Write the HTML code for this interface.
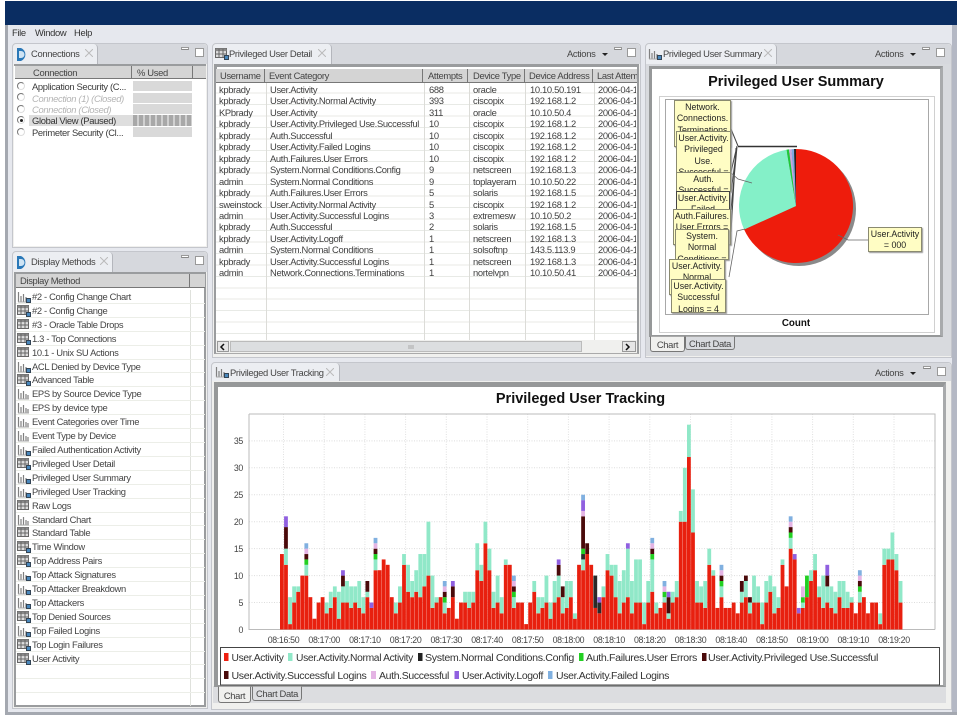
<!DOCTYPE html>
<html>
<head>
<meta charset="utf-8">
<style>
html,body{margin:0;padding:0;background:#fff}
#root{position:relative;width:960px;height:716px;overflow:hidden;background:#fff;font-family:"Liberation Sans",sans-serif;font-size:9.4px;letter-spacing:-.33px;color:#3c3c3c;filter:blur(.35px)}
.a{position:absolute}
.panel{position:absolute;background:#f0f0ee;border:1px solid #c4c6cc;border-radius:4px 4px 0 0;box-sizing:border-box}
.tabbar{position:absolute;left:0;right:0;top:0;height:20px;background:#d6d8dd;border-radius:4px 4px 0 0}
.tab{position:absolute;top:0;height:20px;background:#eceef2;border-radius:4px 4px 0 0;border-right:1px solid #b4b6bc;box-sizing:border-box;line-height:20px;white-space:nowrap;color:#444}
.x{position:absolute;top:5px;width:8px;height:8px}
.frame{position:absolute;background:#fff;border:3px solid #969899;border-bottom-width:2px;border-right-color:#a8aaac;box-sizing:border-box}
.mm{position:absolute;width:8px;height:3px;background:#fff;border:1px solid #999;border-bottom:1px solid #888;box-sizing:border-box}
.mx{position:absolute;width:9px;height:9px;background:#fff;border:1px solid #999;box-sizing:border-box}
.hd{position:absolute;background:#d4d4d4;border-bottom:1px solid #777;box-sizing:border-box;line-height:13px;color:#444;white-space:nowrap}
.col{position:absolute;white-space:pre;line-height:11.46px;color:#404040}
.rad{position:absolute;left:17px;width:8px;height:8px;border-radius:50%;border:1px solid #777;border-right-color:#ddd;border-bottom-color:#ddd;box-sizing:border-box;background:#fff}
.cr{position:absolute;left:32px;white-space:nowrap;line-height:11px}
.bar{position:absolute;left:133px;width:59px;height:10px;background:#d9d9d9}
.dm{position:relative;height:13.92px;line-height:13.92px;white-space:nowrap;color:#444;padding-left:16px;box-sizing:border-box;border-bottom:1px solid #eceee8}
.dm svg{position:absolute;left:1px;top:1px}
.yl{position:absolute;background:#fffdc4;border:1px solid #8a8a70;box-sizing:border-box;overflow:hidden;text-align:center;font-size:8.8px;letter-spacing:0;line-height:11.4px;color:#222;box-shadow:1px 1px 1px #999;padding-top:1px}
.bt{position:absolute;border:1px solid #777;border-top:1px solid #aaa;box-sizing:border-box;text-align:center;color:#444;border-radius:0 0 3px 3px;font-size:9.4px}
.ttl{letter-spacing:0}
</style>
</head>
<body>
<div id="root">
<svg width="0" height="0" style="position:absolute">
<defs>
<g id="tb"><rect x=".5" y=".5" width="11" height="9" fill="#ddd" stroke="#666"/><rect x=".5" y=".5" width="11" height="2.6" fill="#888"/><path d="M4 1v8M8 1v8M1 6h10" stroke="#666" fill="none"/></g>
<g id="cb"><path d="M1.5 1v10M4 5v6M6.500 3v8M9 6v5M11 7v4" stroke="#808080" stroke-width="1.200" fill="none"/><path d="M1 11h11" stroke="#aaa"/></g>
<g id="bd"><rect x="9.500" y="7.500" width="4" height="4" fill="#4a88bc" stroke="#345"/></g>
</defs>
</svg>

<!-- window chrome -->
<div class="a" style="left:5px;top:1px;width:952px;height:712px;background:#e6e8ee"></div>
<div class="a" style="left:5px;top:1px;width:952px;height:24px;background:#0a2d62"></div>
<div class="a" style="left:5px;top:25px;width:3px;height:690px;background:#a4a8b0"></div>
<div class="a" style="left:952px;top:25px;width:5px;height:690px;background:#b4b8c4"></div>
<div class="a" style="left:5px;top:712px;width:952px;height:3px;background:#a4a8b0"></div>
<div class="a" style="left:12px;top:27px;white-space:nowrap;line-height:12px;color:#333">File</div>
<div class="a" style="left:35px;top:27px;white-space:nowrap;line-height:12px;color:#333">Window</div>
<div class="a" style="left:74px;top:27px;white-space:nowrap;line-height:12px;color:#333">Help</div>

<!-- Connections -->
<div class="panel" style="left:12px;top:43px;width:196px;height:205px">
  <div class="tabbar"></div>
  <div class="tab" style="left:0;width:85px;padding-left:18px">Connections</div>
  <svg class="a" style="left:3px;top:4px" width="13" height="13"><path d="M1 0h4a7 7 0 0 1 0 13H1z" fill="#2a78b8"/><path d="M3 3h2a3.500 3.500 0 0 1 0 7H3z" fill="#cfe4f4"/></svg>
  <svg class="x" style="left:72px"><path d="M0 0l8 8M8 0l-8 8" stroke="#bbb" stroke-width="1"/></svg>
  <div class="mm" style="left:168px;top:3px"></div><div class="mx" style="left:182px;top:4px"></div>
  <div class="a" style="left:1px;right:1px;top:20px;bottom:1px;background:#fff;border-top:2px solid #9a9c9e"></div>
</div>
<div class="hd" style="left:15px;top:66px;width:16px;height:13px"></div>
<div class="hd" style="left:31px;top:66px;width:101px;height:13px;padding-left:2px;border-right:1px solid #777">Connection</div>
<div class="hd" style="left:132px;top:66px;width:61px;height:13px;padding-left:5px;border-right:1px solid #777">% Used</div>
<div class="hd" style="left:193px;top:66px;width:13px;height:13px"></div>
<div class="rad" style="top:82px"></div><div class="cr" style="top:81px">Application Security (C...</div><div class="bar" style="top:81px"></div>
<div class="rad" style="top:93px"></div><div class="cr" style="top:92.500px;color:#b4b4b4;font-style:italic">Connection (1) (Closed)</div><div class="bar" style="top:92.500px"></div>
<div class="rad" style="top:105px"></div><div class="cr" style="top:104px;color:#b4b4b4;font-style:italic">Connection (Closed)</div><div class="bar" style="top:104px"></div>
<div class="a" style="left:29px;top:115px;width:104px;height:11px;background:#dedede"></div>
<div class="rad" style="top:116px"></div><div class="a" style="left:19.500px;top:118.500px;width:3px;height:3px;border-radius:50%;background:#222"></div><div class="cr" style="top:115px;color:#333">Global View (Paused)</div>
<div class="a" style="left:133px;top:115px;width:59px;height:11px;background:repeating-linear-gradient(90deg,#a8a8a8 0 4px,#d0d0d0 4px 6px)"></div>
<div class="rad" style="top:128px"></div><div class="cr" style="top:127px">Perimeter Security (Cl...</div><div class="bar" style="top:127px"></div>

<!-- Display Methods -->
<div class="panel" style="left:12px;top:251px;width:196px;height:458px">
  <div class="tabbar"></div>
  <div class="tab" style="left:0;width:100px;padding-left:18px">Display Methods</div>
  <svg class="a" style="left:3px;top:4px" width="13" height="13"><path d="M1 0h4a7 7 0 0 1 0 13H1z" fill="#2a78b8"/><path d="M3 3h2a3.500 3.500 0 0 1 0 7H3z" fill="#cfe4f4"/></svg>
  <svg class="x" style="left:87px"><path d="M0 0l8 8M8 0l-8 8" stroke="#bbb" stroke-width="1"/></svg>
  <div class="mm" style="left:168px;top:3px"></div><div class="mx" style="left:182px;top:4px"></div>
  <div class="a" style="left:1px;right:1px;top:20px;bottom:1px;background:#fff;border:2px solid #9a9c9e;border-bottom-width:2px"></div>
</div>
<div class="hd" style="left:16px;top:274px;width:174px;height:14px;padding-left:4px;border-right:1px solid #777;line-height:14px">Display Method</div>
<div class="hd" style="left:190px;top:274px;width:15px;height:14px"></div>
<div class="a" style="left:16px;top:290px;width:189px;height:416px;overflow:hidden;background:linear-gradient(90deg,transparent 174px,#dfe1dc 174px,#dfe1dc 175px,transparent 175px)">
<div class="dm"><svg width="16" height="13"><use href="#cb"/><use href="#bd"/></svg>#2 - Config Change Chart</div>
<div class="dm"><svg width="16" height="13"><use href="#tb"/><use href="#bd"/></svg>#2 - Config Change</div>
<div class="dm"><svg width="16" height="13"><use href="#tb"/></svg>#3 - Oracle Table Drops</div>
<div class="dm"><svg width="16" height="13"><use href="#tb"/><use href="#bd"/></svg>1.3 - Top Connections</div>
<div class="dm"><svg width="16" height="13"><use href="#tb"/></svg>10.1 - Unix SU Actions</div>
<div class="dm"><svg width="16" height="13"><use href="#cb"/><use href="#bd"/></svg>ACL Denied by Device Type</div>
<div class="dm"><svg width="16" height="13"><use href="#tb"/><use href="#bd"/></svg>Advanced Table</div>
<div class="dm"><svg width="16" height="13"><use href="#cb"/></svg>EPS by Source Device Type</div>
<div class="dm"><svg width="16" height="13"><use href="#cb"/></svg>EPS by device type</div>
<div class="dm"><svg width="16" height="13"><use href="#cb"/></svg>Event Categories over Time</div>
<div class="dm"><svg width="16" height="13"><use href="#cb"/></svg>Event Type by Device</div>
<div class="dm"><svg width="16" height="13"><use href="#cb"/><use href="#bd"/></svg>Failed Authentication Activity</div>
<div class="dm"><svg width="16" height="13"><use href="#tb"/><use href="#bd"/></svg>Privileged User Detail</div>
<div class="dm"><svg width="16" height="13"><use href="#cb"/><use href="#bd"/></svg>Privileged User Summary</div>
<div class="dm"><svg width="16" height="13"><use href="#cb"/><use href="#bd"/></svg>Privileged User Tracking</div>
<div class="dm"><svg width="16" height="13"><use href="#tb"/></svg>Raw Logs</div>
<div class="dm"><svg width="16" height="13"><use href="#cb"/></svg>Standard Chart</div>
<div class="dm"><svg width="16" height="13"><use href="#tb"/></svg>Standard Table</div>
<div class="dm"><svg width="16" height="13"><use href="#tb"/><use href="#bd"/></svg>Time Window</div>
<div class="dm"><svg width="16" height="13"><use href="#tb"/><use href="#bd"/></svg>Top Address Pairs</div>
<div class="dm"><svg width="16" height="13"><use href="#cb"/><use href="#bd"/></svg>Top Attack Signatures</div>
<div class="dm"><svg width="16" height="13"><use href="#cb"/><use href="#bd"/></svg>Top Attacker Breakdown</div>
<div class="dm"><svg width="16" height="13"><use href="#cb"/><use href="#bd"/></svg>Top Attackers</div>
<div class="dm"><svg width="16" height="13"><use href="#tb"/><use href="#bd"/></svg>Top Denied Sources</div>
<div class="dm"><svg width="16" height="13"><use href="#cb"/><use href="#bd"/></svg>Top Failed Logins</div>
<div class="dm"><svg width="16" height="13"><use href="#tb"/><use href="#bd"/></svg>Top Login Failures</div>
<div class="dm"><svg width="16" height="13"><use href="#tb"/><use href="#bd"/></svg>User Activity</div>
<div class="dm"></div><div class="dm"></div><div class="dm"></div>
</div>

<!-- Detail -->
<div class="panel" style="left:212px;top:43px;width:429px;height:315px">
  <div class="tabbar"></div>
  <div class="tab" style="left:0;width:119px;padding-left:16px">Privileged User Detail</div>
  <svg class="a" style="left:2px;top:4px" width="16" height="13"><use href="#tb"/><use href="#bd"/></svg>
  <svg class="x" style="left:105px"><path d="M0 0l8 8M8 0l-8 8" stroke="#bbb" stroke-width="1"/></svg>
  <div class="a" style="left:354px;top:4px;line-height:12px;color:#444">Actions</div>
  <div class="a" style="left:389px;top:9px;border:3px solid transparent;border-top:3px solid #222"></div>
  <div class="mm" style="left:401px;top:3px"></div><div class="mx" style="left:414px;top:4px"></div>
  <div class="a" style="left:1px;right:1px;top:20px;bottom:3px;background:#fff;border:3px solid #9a9c9e;border-bottom:1px solid #aaa;border-right-width:2px;box-sizing:border-box"></div>
</div>
<div class="a" style="left:216px;top:82px;width:421px;height:258px;background:repeating-linear-gradient(180deg,#fff 0 10.46px,#e8eae6 10.46px 11.46px)"></div>
<div class="a" style="left:265.500px;top:82px;width:1px;height:258px;background:#dcdcd8"></div>
<div class="a" style="left:424px;top:82px;width:1px;height:258px;background:#dcdcd8"></div>
<div class="a" style="left:469px;top:82px;width:1px;height:258px;background:#dcdcd8"></div>
<div class="a" style="left:525px;top:82px;width:1px;height:258px;background:#dcdcd8"></div>
<div class="a" style="left:593.500px;top:82px;width:1px;height:258px;background:#dcdcd8"></div>
<div class="hd" style="left:216px;top:69px;width:49px;height:14px;padding-left:4px;border-right:1px solid #777;line-height:14px">Username</div>
<div class="hd" style="left:265px;top:69px;width:158px;height:14px;padding-left:4px;border-right:1px solid #777;line-height:14px">Event Category</div>
<div class="hd" style="left:423px;top:69px;width:45px;height:14px;padding-left:5px;border-right:1px solid #777;line-height:14px">Attempts</div>
<div class="hd" style="left:468px;top:69px;width:57px;height:14px;padding-left:5px;border-right:1px solid #777;line-height:14px">Device Type</div>
<div class="hd" style="left:525px;top:69px;width:68px;height:14px;padding-left:4px;border-right:1px solid #777;line-height:14px">Device Address</div>
<div class="hd" style="left:593px;top:69px;width:44px;height:14px;padding-left:4px;line-height:14px;overflow:hidden">Last Attempt</div>
<div class="col" style="left:219px;top:84px">kpbrady
kpbrady
KPbrady
kpbrady
kpbrady
kpbrady
kpbrady
kpbrady
admin
kpbrady
sweinstock
admin
kpbrady
kpbrady
admin
kpbrady
admin</div>
<div class="col" style="left:270px;top:84px">User.Activity
User.Activity.Normal Activity
User.Activity
User.Activity.Privileged Use.Successful
Auth.Successful
User.Activity.Failed Logins
Auth.Failures.User Errors
System.Normal Conditions.Config
System.Normal Conditions
Auth.Failures.User Errors
User.Activity.Normal Activity
User.Activity.Successful Logins
Auth.Successful
User.Activity.Logoff
System.Normal Conditions
User.Activity.Successful Logins
Network.Connections.Terminations</div>
<div class="col" style="left:429px;top:84px">688
393
311
10
10
10
10
9
9
5
5
3
2
1
1
1
1</div>
<div class="col" style="left:473px;top:84px">oracle
ciscopix
oracle
ciscopix
ciscopix
ciscopix
ciscopix
netscreen
toplayeram
solaris
ciscopix
extremesw
solaris
netscreen
solsoftnp
netscreen
nortelvpn</div>
<div class="col" style="left:530px;top:84px">10.10.50.191
192.168.1.2
10.10.50.4
192.168.1.2
192.168.1.2
192.168.1.2
192.168.1.2
192.168.1.3
10.10.50.22
192.168.1.5
192.168.1.2
10.10.50.2
192.168.1.5
192.168.1.3
143.5.113.9
192.168.1.3
10.10.50.41</div>
<div class="col" style="left:598px;top:84px;width:38px;overflow:hidden">2006-04-14
2006-04-14
2006-04-14
2006-04-14
2006-04-14
2006-04-14
2006-04-14
2006-04-14
2006-04-14
2006-04-14
2006-04-14
2006-04-14
2006-04-14
2006-04-14
2006-04-14
2006-04-14
2006-04-14</div>
<div class="a" style="left:216px;top:340px;width:421px;height:13px;background:#f0f0ee"></div>
<div class="a" style="left:217px;top:341px;width:12px;height:11px;background:#e6e6e6;border:1px solid #999;box-sizing:border-box"></div>
<div class="a" style="left:230px;top:341px;width:352px;height:11px;background:#dcdee0;border:1px solid #bbb;box-sizing:border-box"></div>
<div class="a" style="left:622px;top:341px;width:14px;height:11px;background:#e6e6e6;border:1px solid #999;box-sizing:border-box"></div>
<svg class="a" style="left:217px;top:341px" width="420" height="12"><path d="M7 3L4 6l3 3M409 3l3 3-3 3" stroke="#111" stroke-width="1.500" fill="none"/><path d="M192 4v4M194 4v4M196 4v4" stroke="#aaa"/></svg>

<!-- Summary -->
<div class="panel" style="left:645px;top:43px;width:307px;height:315px">
  <div class="tabbar"></div>
  <div class="tab" style="left:0;width:131px;padding-left:17px">Privileged User Summary</div>
  <svg class="a" style="left:2px;top:4px" width="16" height="13"><use href="#cb"/><use href="#bd"/></svg>
  <svg class="x" style="left:118px"><path d="M0 0l8 8M8 0l-8 8" stroke="#bbb" stroke-width="1"/></svg>
  <div class="a" style="left:229px;top:4px;line-height:12px;color:#444">Actions</div>
  <div class="a" style="left:264px;top:9px;border:3px solid transparent;border-top:3px solid #222"></div>
  <div class="mm" style="left:276px;top:3px"></div><div class="mx" style="left:290px;top:4px"></div>
</div>
<div class="a" style="left:646px;top:64px;width:305px;height:292px;background:#d8dade"></div>
<div class="frame" style="left:649px;top:66px;width:294px;height:271px"></div>
<div class="a" style="left:659px;top:96px;width:276px;height:237px;border:1px solid #d0d0d0;box-sizing:border-box"></div>
<div class="a" style="left:665px;top:99px;width:264px;height:216px;border:1px solid #a8a8a8;box-sizing:border-box"></div>
<div class="a ttl" style="left:652px;top:74px;width:288px;text-align:center;font-weight:bold;font-size:14.500px;line-height:17px;color:#111">Privileged User Summary</div>
<div class="a ttl" style="left:652px;top:318px;width:288px;text-align:center;font-weight:bold;font-size:9.800px;line-height:12px;color:#111">Count</div>
<svg class="a" style="left:0;top:0" width="960" height="716">
  <circle cx="799" cy="209" r="57" fill="#8a8a8a"/>
  <path d="M796 206L796 149A57 57 0 1 1 744.100 229.500Z" fill="#ee1c0c"/>
  <path d="M796 206L744.100 229.500A57 57 0 0 1 786.500 149.800Z" fill="#84f0c8"/>
  <path d="M796 206L786.500 149.800A57 57 0 0 1 789 149.400Z" fill="#20c838"/>
  <path d="M796 206L789 149.400A57 57 0 0 1 791.500 149.200Z" fill="#c8a8e0"/>
  <path d="M796 206L791.500 149.200A57 57 0 0 1 794 149Z" fill="#80a8e0"/>
  <path d="M796 206L794 149A57 57 0 0 1 796 149Z" fill="#222"/>
  <path d="M738 146.500H797" stroke="#333" stroke-width="1.600" fill="none"/>
  <path d="M731 129L738 146M731 172L737 146M731 192L737 147M731 210L737 147M731 232L736 148" stroke="#444" stroke-width="1" fill="none"/>
  <path d="M730 172L738 179L752 183M729 277L737 231L745 229M838 235L848 240L868 240" stroke="#666" stroke-width=".8" fill="none"/>
</svg>
<div class="yl" style="left:674px;top:100px;width:57px;height:47px">Network.<br>Connections.<br>Terminations<br>= 1</div>
<div class="yl" style="left:676px;top:131px;width:55px;height:42px">User.Activity.<br>Privileged<br>Use.<br>Successful =<br>10</div>
<div class="yl" style="left:676px;top:172px;width:55px;height:20px">Auth.<br>Successful =</div>
<div class="yl" style="left:676px;top:191px;width:54px;height:19px;border-color:#444">User.Activity.<br>Failed</div>
<div class="yl" style="left:673px;top:209px;width:58px;height:36px">Auth.Failures.<br>User Errors =<br>15</div>
<div class="yl" style="left:675px;top:229px;width:54px;height:31px">System.<br>Normal<br>Conditions =<br>19</div>
<div class="yl" style="left:669px;top:259px;width:56px;height:36px">User.Activity.<br>Normal<br>Activity</div>
<div class="yl" style="left:671px;top:279px;width:55px;height:34px">User.Activity.<br>Successful<br>Logins = 4</div>
<div class="yl" style="left:868px;top:227px;width:54px;height:25px">User.Activity<br>= 000</div>
<div class="bt" style="left:650px;top:336px;width:35px;height:16px;background:#f0f0ee;line-height:16px">Chart</div>
<div class="bt" style="left:685px;top:336px;width:50px;height:14px;background:#d8dade;line-height:13px">Chart Data</div>

<!-- Tracking -->
<div class="panel" style="left:211px;top:362px;width:741px;height:348px">
  <div class="tabbar"></div>
  <div class="tab" style="left:0;width:128px;padding-left:18px">Privileged User Tracking</div>
  <svg class="a" style="left:3px;top:3px" width="16" height="13"><use href="#cb"/><use href="#bd"/></svg>
  <svg class="x" style="left:114px"><path d="M0 0l8 8M8 0l-8 8" stroke="#bbb" stroke-width="1"/></svg>
  <div class="a" style="left:663px;top:4px;line-height:12px;color:#444">Actions</div>
  <div class="a" style="left:698px;top:9px;border:3px solid transparent;border-top:3px solid #222"></div>
  <div class="mm" style="left:711px;top:3px"></div><div class="mx" style="left:725px;top:4px"></div>
</div>
<div class="a" style="left:212px;top:381px;width:739px;height:328px;background:#f0f0ee"></div>
<div class="a" style="left:213px;top:686px;width:733px;height:17px;background:#dcdde0"></div>
<div class="frame" style="left:214px;top:382px;width:732px;height:305px;border-width:5px 3px 2px 4px"></div>
<div class="a ttl" style="left:218px;top:390px;width:725px;text-align:center;font-weight:bold;font-size:14.500px;line-height:18px;color:#111">Privileged User Tracking</div>
<svg id="tc" class="a" style="left:0;top:0" width="960" height="716" font-family="'Liberation Sans',sans-serif">
  <g id="grid"></g>
  <path d="M249 414V629.500H935M249 414H935V629.500" stroke="#bbb" fill="none"/>
  <g id="bars"></g>
  <g font-size="8.800" fill="#444" text-anchor="end">
    <text x="243" y="633">0</text><text x="243" y="606">5</text><text x="243" y="579">10</text><text x="243" y="552">15</text><text x="243" y="525">20</text><text x="243" y="498">25</text><text x="243" y="471">30</text><text x="243" y="444">35</text>
  </g>
  <g font-size="8.800" fill="#444" text-anchor="middle">
    <text x="283.500" y="643">08:16:50</text><text x="324.200" y="643">08:17:00</text><text x="364.900" y="643">08:17:10</text><text x="405.600" y="643">08:17:20</text><text x="446.300" y="643">08:17:30</text><text x="487" y="643">08:17:40</text><text x="527.700" y="643">08:17:50</text><text x="568.400" y="643">08:18:00</text><text x="609.100" y="643">08:18:10</text><text x="649.800" y="643">08:18:20</text><text x="690.500" y="643">08:18:30</text><text x="731.200" y="643">08:18:40</text><text x="771.900" y="643">08:18:50</text><text x="812.600" y="643">08:19:00</text><text x="853.300" y="643">08:19:10</text><text x="894" y="643">08:19:20</text>
  </g>
  <rect x="220.500" y="647.500" width="719" height="37.500" fill="#fff" stroke="#444" stroke-width="1"/>
  <g font-size="10" fill="#333">
    <rect x="224" y="653" width="4.500" height="8" fill="#ee2010"/><text x="231.500" y="661" textLength="52" lengthAdjust="spacingAndGlyphs">User.Activity</text>
    <rect x="288" y="653" width="4.500" height="8" fill="#90e8c8"/><text x="296" y="661" textLength="117" lengthAdjust="spacingAndGlyphs">User.Activity.Normal Activity</text>
    <rect x="418" y="653" width="4.500" height="8" fill="#222"/><text x="425" y="661" textLength="149" lengthAdjust="spacingAndGlyphs">System.Normal Conditions.Config</text>
    <rect x="579" y="653" width="4.500" height="8" fill="#22d022"/><text x="586" y="661" textLength="111" lengthAdjust="spacingAndGlyphs">Auth.Failures.User Errors</text>
    <rect x="702" y="653" width="4.500" height="8" fill="#4a0a0a"/><text x="708" y="661" textLength="170" lengthAdjust="spacingAndGlyphs">User.Activity.Privileged Use.Successful</text>
    <rect x="224" y="671" width="4.500" height="8" fill="#4a0a0a"/><text x="231.500" y="679" textLength="135" lengthAdjust="spacingAndGlyphs">User.Activity.Successful Logins</text>
    <rect x="371" y="671" width="5" height="8" fill="#e4b4e4"/><text x="379" y="679" textLength="70" lengthAdjust="spacingAndGlyphs">Auth.Successful</text>
    <rect x="454.500" y="671" width="4.500" height="8" fill="#9060e0"/><text x="462" y="679" textLength="81" lengthAdjust="spacingAndGlyphs">User.Activity.Logoff</text>
    <rect x="548" y="671" width="4.500" height="8" fill="#80b0e0"/><text x="556" y="679" textLength="113" lengthAdjust="spacingAndGlyphs">User.Activity.Failed Logins</text>
  </g>
</svg>
<div class="bt" style="left:218px;top:686px;width:33px;height:17px;background:#f0f0ee;line-height:17px">Chart</div>
<div class="bt" style="left:252px;top:686px;width:50px;height:15px;background:#dcdde0;line-height:13px">Chart Data</div>
</div>
<script>
(function(){
var d="14 12,15,M19,P21 1,6 5,8 7,8 10 10,12,G13,M14,K15,B16 6 2 5 6 3,5 4,7 6,8 2,7 5,8,M10,P11 5,9 4,8 5,8 4,9 3,6 6,7,M9 4,4,P5 11,13,G14,M15,K16,B17 11 13 12 6 3,5 5,8 12,14 7,12 6,9 7,11 6,14 8,14 10,20 4,10 5,6 6 3,5,G6,M7,K8,B9 4 6,6,M8,P9 2 5 5,7 4,7 5,7 11,16 9,12 16,20 11,15 4,7 5,10 3,6 12,13 12 4,6,G7,M8,K9,B10 5 5 1 5 7,9 3,6 4,6 5,10 2,5 5,9 6,10,M12,P13 3,6,M8 4,9 6,9 2,3 12 11,13,D14,G15,M21,K22,P24,B25 14,14,M16 12 4,4,D10 3,3,D5,P6 6,8 11,14 10,12 6,12 3,9 5,11 6,15,P16 3,9 5,13 5,13 1,5 5,9 7,13,G14,M15,K16,B17 3,5 4 5,6,G7,K8,B9 2,3,M6,P7 5,7 6,9 20,22 20,30 32,38 18,26 5,9 5,8 4,9 12,15 10,11 4 6,8,G9,M10,K11,B12 4 4 5 3 5,7,M9 6,9,M10 3,5,M6 5,10 5,8 1,5 5,9 7,10 3,8 4,6 12,13 8 15,17,G18,M19,K20,B21 13,13,P14 3,3,P4 4,5,G6,K8 6,6,G10 9,11 11,14 6,8 4,10 5,8,M10,P12 4,8 3,7 6,9 4,9 4,7 5,6 3 5,7,G8,M9,K10,B11 6 3 5 5 1,3 12,15 13,15 13,18 11,14 5,9".split(" ");
var C={M:"#4a0a0a",G:"#22d022",K:"#e4b4e4",B:"#80b0e0",P:"#9060e0",D:"#2a2a2a"};
var s="",g="",k=5.39,Y=629.5,i;
for(i=5;i<=35;i+=5){var y=Y-i*k;g+='<path d="M249 '+y+'H935" stroke="#ddd" stroke-dasharray="1 1.5"/>';}
for(i=0;i<16;i++){var x=283.5+i*40.7;g+='<path d="M'+x+' 414V632" stroke="#e0e0e0" stroke-dasharray="1 1.5"/>';}
document.getElementById("grid").innerHTML=g;
function r(x,a,b,c){return '<rect x="'+x.toFixed(2)+'" y="'+(Y-b*k).toFixed(2)+'" width="3.8" height="'+((b-a)*k).toFixed(2)+'" fill="'+c+'"/>';}
for(i=0;i<d.length;i++){
 var x=280+i*4.07,p=d[i].split(","),t=+p[0];
 s+=r(x,0,t,"#e8200f");
 if(p[1]&&+p[1]>t){s+=r(x,t,+p[1],"#90e8c8");}
 if(p[1])t=Math.max(t,+p[1]);
 for(var j=2;j<p.length;j++){var v=+p[j].slice(1);s+=r(x,t,v,C[p[j][0]]);t=v;}
}
document.getElementById("bars").innerHTML=s;
})();
</script>
</body>
</html>
